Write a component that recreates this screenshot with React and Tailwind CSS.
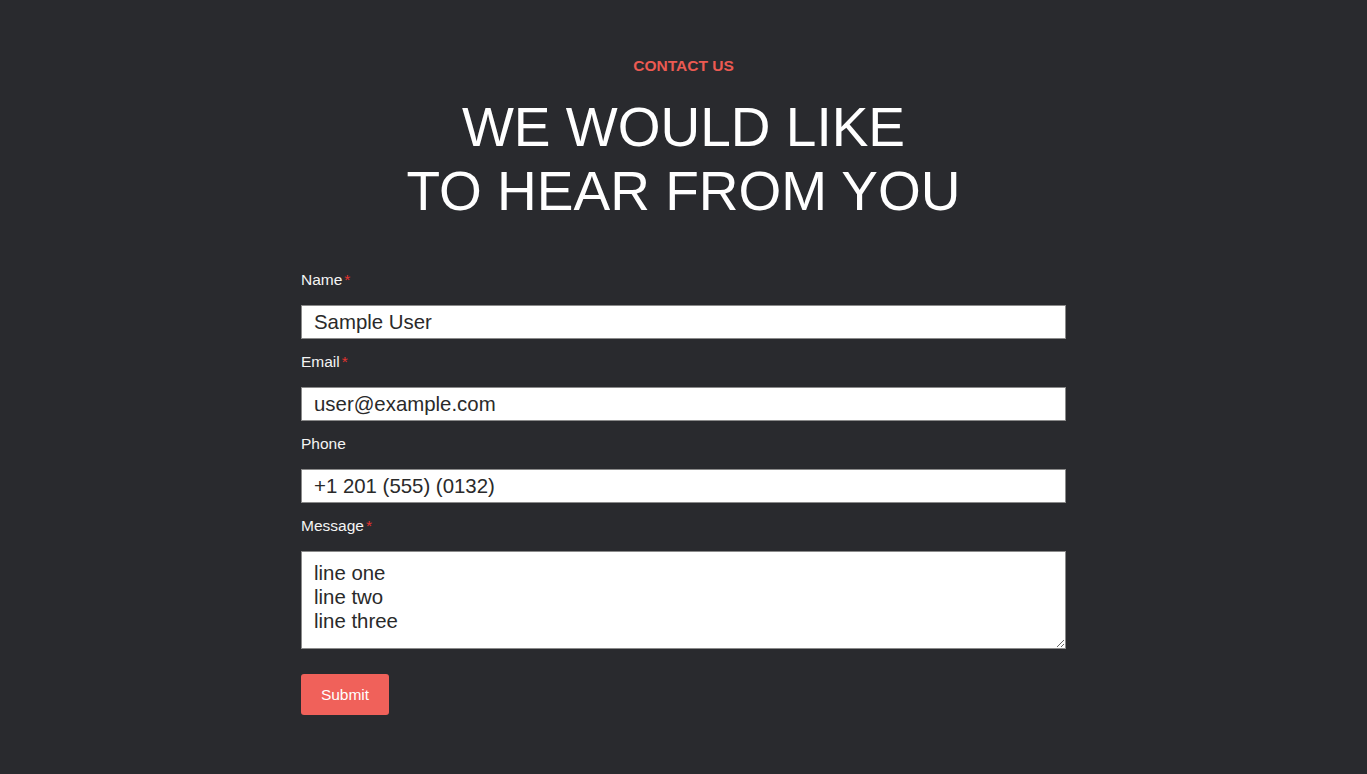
import React from 'react';

const Field = ({ label, required, children }) => (
  <div className="flex flex-col">
    <label className="text-[15.5px] leading-[18px] text-[#f4f4f4] mb-4">
      {label}
      {required && <span className="text-[#e5332f] ml-[2px]">*</span>}
    </label>
    {children}
  </div>
);

const inputClass =
  'w-full h-[34px] bg-white border border-[#8a8a8a] px-3 text-[20.4px] text-[#2a2a2a] outline-none';

export default function App() {
  return (
    <div
      className="min-h-[774px] bg-[#292a2e] flex flex-col items-center pt-[57px]"
      style={{ fontFamily: '"Liberation Sans", Arial, sans-serif' }}
    >
      <p className="text-[15.5px] leading-[18px] font-bold text-[#ec5a52]">CONTACT US</p>
      <h1 className="mt-[20px] text-[55px] leading-[64px] text-white text-center">
        WE WOULD LIKE
        <br />
        TO HEAR FROM YOU
      </h1>

      <form className="w-[765px] mt-[48px] flex flex-col gap-[14px]" onSubmit={(e) => e.preventDefault()}>
        <Field label="Name" required>
          <input className={inputClass} defaultValue="Sample User" />
        </Field>
        <Field label="Email" required>
          <input className={inputClass} defaultValue="user@example.com" />
        </Field>
        <Field label="Phone">
          <input className={inputClass} defaultValue="+1 201 (555) (0132)" />
        </Field>
        <Field label="Message" required>
          <textarea
            className="w-full h-[98px] bg-white border border-[#8a8a8a] px-3 pt-[9px] text-[20.4px] leading-[24px] text-[#2a2a2a] outline-none block"
            defaultValue={'line one\nline two\nline three'}
          />
        </Field>
        <div className="mt-[11px]">
          <button
            type="submit"
            className="w-[88px] h-[41px] rounded-[3px] bg-[#f0615a] text-white text-[15.5px]"
          >
            Submit
          </button>
        </div>
      </form>
    </div>
  );
}
